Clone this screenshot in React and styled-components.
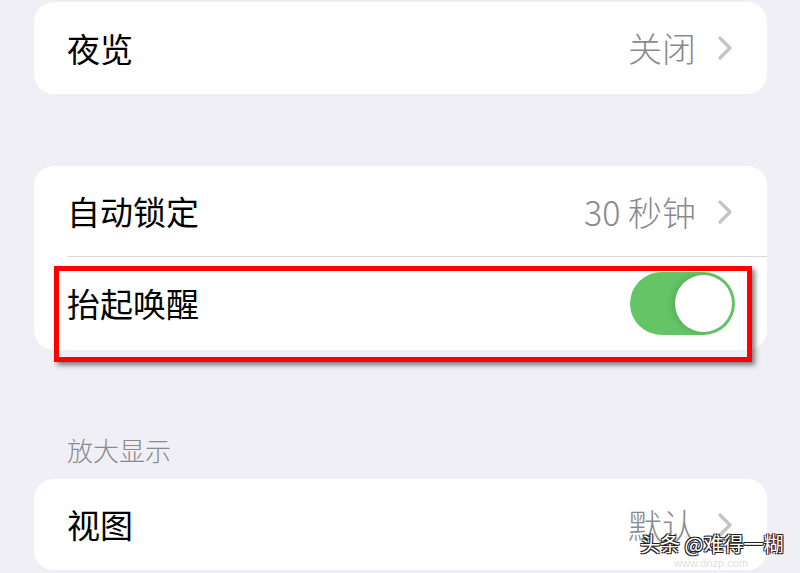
import React from "react";
import styled, { createGlobalStyle } from "styled-components";

const GlobalStyle = createGlobalStyle`
  html, body {
    margin: 0;
    padding: 0;
    background: #f0eff5;
  }
  body {
    font-family: "Noto Sans CJK SC", "Noto Sans", sans-serif;
  }
`;

const Page = styled.div`
  width: 800px;
  height: 573px;
  overflow: hidden;
  box-sizing: border-box;
  padding: 2px 33px 0 34px;
  background: #f0eff5;
`;

const Card = styled.div`
  position: relative;
  background: #fff;
  border-radius: 20px;
  margin-top: ${(p) => p.$top || 0}px;
`;

const Row = styled.div`
  position: relative;
  height: ${(p) => p.$h || 91}px;
  display: flex;
  align-items: center;
  padding: 0 ${(p) => p.$right || 34}px 0 33px;
  box-sizing: border-box;
  ${(p) =>
    p.$divider &&
    `&::after {
      content: "";
      position: absolute;
      left: 33px;
      right: 0;
      bottom: 0;
      height: 1px;
      background: #d9d9dd;
    }`}
`;

const Label = styled.span`
  flex: 1;
  font-size: 33px;
  font-weight: 400;
  color: #000;
  line-height: 1;
`;

const Value = styled.span`
  font-size: 34px;
  font-weight: 300;
  color: #8a8a8e;
  line-height: 1;
  margin-right: 21px;
`;

const Chevron = () => (
  <svg width="16" height="26" viewBox="0 0 16 26">
    <path d="M3 3 L13 13 L3 23" fill="none" stroke="#c4c4c7" strokeWidth="3.2" strokeLinecap="round" strokeLinejoin="round" />
  </svg>
);

const Toggle = styled.div`
  width: 105px;
  height: 63px;
  border-radius: 32px;
  background: #65c466;
  display: flex;
  align-items: center;
  justify-content: flex-end;
  padding: 3px;
  box-sizing: border-box;
`;

const Knob = styled.div`
  width: 57px;
  height: 57px;
  border-radius: 50%;
  background: #fff;
  box-shadow: -3px 0 6px rgba(0, 0, 0, 0.12);
`;

const Highlight = styled.div`
  position: absolute;
  left: 20px;
  top: 9px;
  width: 698px;
  height: 96px;
  box-sizing: border-box;
  border: 5px solid #ff0000;
  box-shadow: 3px 3px 5px rgba(0, 0, 0, 0.5);
  pointer-events: none;
`;

const SectionHeader = styled.div`
  height: 129px;
  display: flex;
  align-items: flex-end;
  padding: 0 0 14px 33px;
  box-sizing: border-box;
  font-size: 26px;
  font-weight: 300;
  line-height: 30px;
  color: #8a8a8e;
`;

const Watermark = styled.div`
  position: absolute;
  left: 606px;
  top: 55px;
  font-size: 20px;
  line-height: 1;
  color: #fff;
  white-space: nowrap;
  text-shadow: -1px -1px 0 #222, 1px -1px 0 #222, -1px 1px 0 #222, 1px 1px 0 #222;
`;

const WatermarkUrl = styled.div`
  position: absolute;
  left: 640px;
  top: 79px;
  font-family: "Liberation Sans", sans-serif;
  font-size: 11px;
  line-height: 1;
  color: rgba(200, 200, 205, 0.6);
`;

export default function App() {
  return (
    <>
      <GlobalStyle />
      <Page>
        <Card>
          <Row $h={92}>
            <Label>夜览</Label>
            <Value>关闭</Value>
            <Chevron />
          </Row>
        </Card>

        <Card $top={72}>
          <Row $divider>
            <Label>自动锁定</Label>
            <Value>30 秒钟</Value>
            <Chevron />
          </Row>
          <Row $h={93} $right={32}>
            <Label>抬起唤醒</Label>
            <Toggle>
              <Knob />
            </Toggle>
            <Highlight />
          </Row>
        </Card>

        <SectionHeader>放大显示</SectionHeader>

        <Card>
          <Row>
            <Label>视图</Label>
            <Value>默认</Value>
            <Chevron />
          </Row>
          <WatermarkUrl>www.dnzp.com</WatermarkUrl>
          <Watermark>头条 @难得一糊</Watermark>
        </Card>
      </Page>
    </>
  );
}
